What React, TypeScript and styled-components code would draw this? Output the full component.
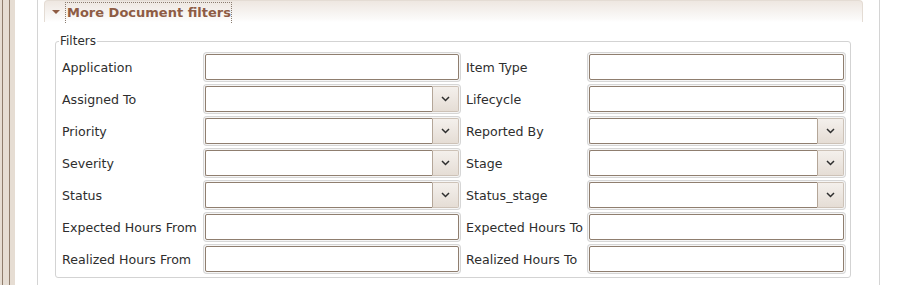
import React, { FC } from "react";
import styled, { createGlobalStyle } from "styled-components";

const GlobalStyle = createGlobalStyle`
  html, body {
    margin: 0;
    padding: 0;
    background: #ffffff;
  }
  body {
    font-family: "DejaVu Sans", "Liberation Sans", sans-serif;
    font-size: 12px;
    color: #2e2e2e;
  }
`;

const Page = styled.div`
  display: flex;
  height: 285px;
  width: 900px;
  overflow: hidden;
`;

const WindowFrame = styled.div<{ $side: "left" | "right" }>`
  flex: none;
  width: ${(p) => (p.$side === "left" ? "15px" : "9px")};
  background: ${(p) =>
    p.$side === "left"
      ? "linear-gradient(to right, #e6ddd3 0 2px, #8f7d6d 2px 3px, #e6ddd3 3px 9px, #8f7d6d 9px 10px, #e6ddd3 10px 15px)"
      : "linear-gradient(to right, #8f7d6d 0 1px, #e6ddd3 1px 9px)"};
`;

const Gutter = styled.div`
  flex: none;
  width: 22px;
`;

const Panel = styled.div`
  flex: none;
  width: 830px;
  border-left: 1px solid #d4d4d4;
  border-right: 1px solid #d4d4d4;
  padding: 0 5px 0 6px;
  box-sizing: content-box;
`;

const Section = styled.div`
  width: 819px;
`;

const SectionHeader = styled.div`
  display: flex;
  align-items: flex-start;
  height: 22px;
  box-sizing: border-box;
  padding: 1px 0 0 7px;
  border: 1px solid #e4dcd4;
  border-bottom: none;
  border-radius: 4px 4px 0 0;
  background: linear-gradient(to bottom, #eee7e1, #fbfaf9 85%, #ffffff);
`;

const Caret = styled.span`
  width: 0;
  height: 0;
  border-left: 4px solid transparent;
  border-right: 4px solid transparent;
  border-top: 4px solid #8e5c44;
  margin-top: 8px;
`;

const SectionTitle = styled.span`
  display: flex;
  align-items: center;
  height: 21px;
  box-sizing: border-box;
  margin: 0 0 0 5px;
  padding: 0 0 1px 1px;
  border: 1px dotted #8a7c70;
  border-bottom: none;
  font-weight: bold;
  font-size: 13px;
  color: #8e5c44;
`;

const SectionBody = styled.div`
  padding: 12px 12px 0 11px;
`;

const FilterSet = styled.fieldset`
  margin: 0;
  padding: 3px 6px 2px 6px;
  border: 1px solid #d3d3d3;
  border-radius: 3px;
`;

const Legend = styled.legend`
  padding: 0 1px;
  margin-left: -3px;
  font-size: 12px;
  line-height: 14px;
  color: #2e2e2e;
`;

const FieldGrid = styled.div`
  display: grid;
  grid-template-columns: 143px 254px 130px 255px;
  grid-auto-rows: 32px;
  align-items: center;
`;

const FieldLabel = styled.label<{ $indent?: boolean }>`
  padding-left: ${(p) => (p.$indent ? "7px" : "0")};
  font-size: 12.6px;
  line-height: 16px;
  padding-top: 1px;
  color: #2e2e2e;
  white-space: nowrap;
`;

const TextBox = styled.input`
  display: block;
  width: 100%;
  height: 26px;
  box-sizing: border-box;
  margin: 0;
  border: 1px solid #8f7e6f;
  border-radius: 2px;
  background: #ffffff;
  box-shadow: 0 0 0 1px #f6f6f6, 0 0 0 2px #d6d6d6;
  outline: none;
`;

const ComboBox = styled.div`
  display: flex;
  height: 26px;
  border-radius: 2px;
  box-shadow: 0 0 0 1px #f6f6f6, 0 0 0 2px #d6d6d6;
`;

const ComboEntry = styled.div`
  flex: 1;
  border: 1px solid #8f7e6f;
  border-right: none;
  border-radius: 2px 0 0 2px;
  background: #ffffff;
`;

const ComboButton = styled.div`
  flex: none;
  display: flex;
  align-items: center;
  justify-content: center;
  width: 27px;
  box-sizing: border-box;
  border: 1px solid #cdc2b7;
  border-left-color: #b4a698;
  border-radius: 0 2px 2px 0;
  background: linear-gradient(to bottom, #f4f0ec, #e5ddd5);
`;

const Chevron: FC = () => (
  <svg width="9" height="6" viewBox="0 0 9 6">
    <polyline
      points="1,1 4.5,4.5 8,1"
      fill="none"
      stroke="#2e2e2e"
      strokeWidth="1.5"
    />
  </svg>
);

interface Field {
  label: string;
  kind: "text" | "select";
}

const rows: [Field, Field][] = [
  [
    { label: "Application", kind: "text" },
    { label: "Item Type", kind: "text" },
  ],
  [
    { label: "Assigned To", kind: "select" },
    { label: "Lifecycle", kind: "text" },
  ],
  [
    { label: "Priority", kind: "select" },
    { label: "Reported By", kind: "select" },
  ],
  [
    { label: "Severity", kind: "select" },
    { label: "Stage", kind: "select" },
  ],
  [
    { label: "Status", kind: "select" },
    { label: "Status_stage", kind: "select" },
  ],
  [
    { label: "Expected Hours From", kind: "text" },
    { label: "Expected Hours To", kind: "text" },
  ],
  [
    { label: "Realized Hours From", kind: "text" },
    { label: "Realized Hours To", kind: "text" },
  ],
];

const FieldControl: FC<{ field: Field }> = ({ field }) =>
  field.kind === "select" ? (
    <ComboBox>
      <ComboEntry />
      <ComboButton>
        <Chevron />
      </ComboButton>
    </ComboBox>
  ) : (
    <TextBox type="text" />
  );

const App: FC = () => {
  return (
    <>
      <GlobalStyle />
      <Page>
        <WindowFrame $side="left" />
        <Gutter />
        <Panel>
          <Section>
            <SectionHeader>
              <Caret />
              <SectionTitle>More Document filters</SectionTitle>
            </SectionHeader>
            <SectionBody>
              <FilterSet>
                <Legend>Filters</Legend>
                <FieldGrid>
                  {rows.map(([left, right]) => (
                    <React.Fragment key={left.label}>
                      <FieldLabel>{left.label}</FieldLabel>
                      <FieldControl field={left} />
                      <FieldLabel $indent>{right.label}</FieldLabel>
                      <FieldControl field={right} />
                    </React.Fragment>
                  ))}
                </FieldGrid>
              </FilterSet>
            </SectionBody>
          </Section>
        </Panel>
        <Gutter />
        <WindowFrame $side="right" />
      </Page>
    </>
  );
};

export default App;
